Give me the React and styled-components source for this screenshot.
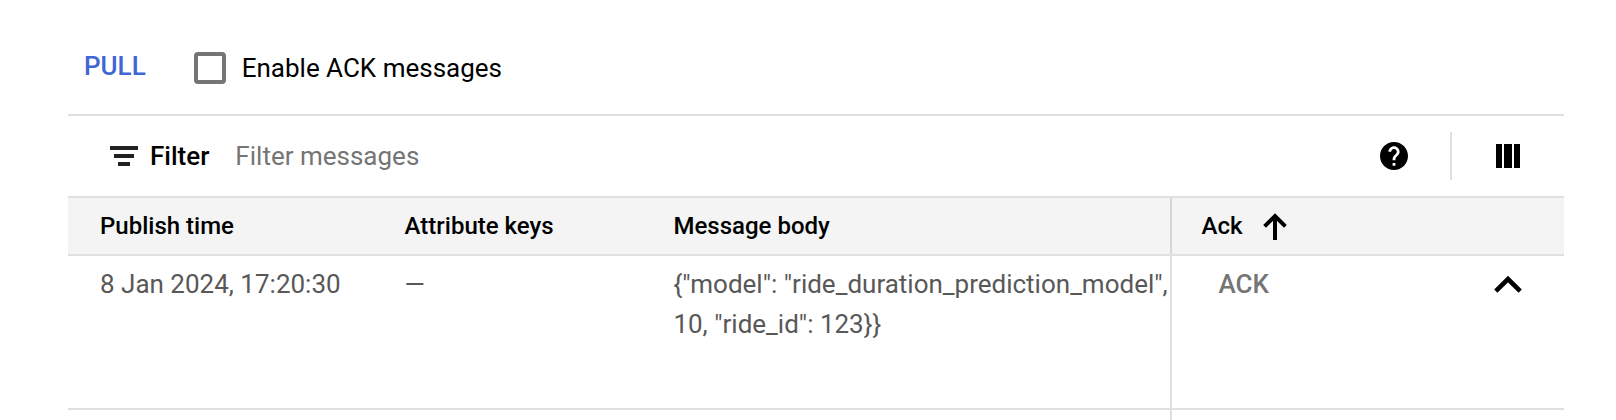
import React from "react";
import styled, { createGlobalStyle } from "styled-components";

const GlobalStyle = createGlobalStyle`
  * { box-sizing: border-box; }
  body { margin: 0; background: #fff; font-family: Roboto, sans-serif; overflow: hidden; }
`;

const Panel = styled.main`
  margin: 0 52px 0 68px;
  height: 420px;
  overflow: hidden;
  color: #000;
  font-size: 26px;
  white-space: nowrap;
`;

const ActionBar = styled.div`
  display: flex;
  height: 116px;
  padding: 46px 0 0 16px;
  border-bottom: 2px solid #e0e0e0;
`;

const TextButton = styled.button`
  height: 40px;
  padding: 0;
  border: 0;
  background: none;
  font: 500 26px/40px Roboto, sans-serif;
  color: ${(p) => (p.$muted ? "#757575" : "#3f66d4")};
`;

const CheckLabel = styled.label`
  display: flex;
  align-items: center;
  gap: 16px;
  height: 40px;
  margin: 2px 0 0 48px;
  line-height: 40px;
`;

const CheckBox = styled.span`
  width: 32px;
  height: 32px;
  border: 4px solid #757575;
  border-radius: 4px;
`;

const FilterBar = styled.div`
  display: flex;
  align-items: center;
  height: 82px;
  padding: 0 44px 0 42px;
  border-bottom: 2px solid #e0e0e0;
  line-height: 40px;
`;

const FilterTitle = styled.span`
  margin-left: 12px;
  font-weight: 500;
`;

const FilterHint = styled.span`
  flex: 1;
  margin-left: 26px;
  color: #757575;
`;

const Separator = styled.span`
  width: 2px;
  height: 48px;
  margin: 0 44px 0 42px;
  background: #e0e0e0;
`;

const Row = styled.div`
  display: grid;
  grid-template-columns: 304px 270px 530px 1fr;
  height: ${(p) => p.$height}px;
  color: #585858;
  line-height: 40px;
  border-bottom: 2px solid #e0e0e0;
`;

const HeaderRow = styled(Row)`
  background: #f4f4f4;
  color: #000;
  font-size: 24px;
  font-weight: 500;
  line-height: 56px;
`;

const Cell = styled.div`
  padding: ${(p) => p.$top || 0}px 0 0 ${(p) => p.$left || 0}px;
  border-right: ${(p) => (p.$edge ? `2px solid ${p.$edge}` : "0")};
  overflow: hidden;
`;

const AckHeader = styled.div`
  display: flex;
  align-items: center;
  gap: 18px;
  padding-left: 29.5px;
`;

const AckTitle = styled.span`
  width: 42.5px;
`;

const AckCell = styled.div`
  display: flex;
  align-items: flex-start;
  justify-content: space-between;
  padding: 8px 42px 0 46.4px;
`;

const Icon = styled.svg`
  display: block;
  flex: none;
  margin-top: ${(p) => p.$top || 0}px;
`;

const FilterIcon = () => (
  <Icon width="28" height="20" fill="#212121">
    <path d="M0 0h28v4H0zM4 8h20v4H4zM8 16h12v4H8z" />
  </Icon>
);

const HelpIcon = () => (
  <Icon width="28" height="28" viewBox="2 2 20 20">
    <path d="M12 2C6.48 2 2 6.48 2 12s4.48 10 10 10 10-4.48 10-10S17.52 2 12 2zm1 17h-2v-2h2v2zm2.07-7.75l-.9.92C13.45 12.9 13 13.5 13 15h-2v-.5c0-1.1.45-2.1 1.17-2.83l1.24-1.26c.37-.36.59-.86.59-1.41 0-1.1-.9-2-2-2s-2 .9-2 2H8c0-2.21 1.79-4 4-4s4 1.79 4 4c0 .88-.36 1.68-.93 2.25z" />
  </Icon>
);

const ColumnsIcon = () => (
  <Icon width="24" height="24">
    <path d="M0 0h6v24H0zM8 0h8v24H8zM18 0h6v24h-6z" />
  </Icon>
);

const SortIcon = () => (
  <Icon width="26" height="28" fill="none" stroke="#000" strokeWidth="4">
    <path d="M13 28V5M2.6 14.4 13 4l10.4 10.4" />
  </Icon>
);

const CollapseIcon = () => (
  <Icon $top={11} width="28" height="20" fill="none" stroke="#000" strokeWidth="4.6">
    <path d="M1.8 16.2 14 4l12.2 12.2" />
  </Icon>
);

export default function App() {
  return (
    <Panel>
      <GlobalStyle />
      <ActionBar>
        <TextButton>PULL</TextButton>
        <CheckLabel>
          <CheckBox />
          Enable ACK messages
        </CheckLabel>
      </ActionBar>
      <FilterBar>
        <FilterIcon />
        <FilterTitle>Filter</FilterTitle>
        <FilterHint>Filter messages</FilterHint>
        <HelpIcon />
        <Separator />
        <ColumnsIcon />
      </FilterBar>
      <HeaderRow $height={58}>
        <Cell $left={32}>Publish time</Cell>
        <Cell $left={32.6}>Attribute keys</Cell>
        <Cell $left={31.5} $edge="#d6d6d6">Message body</Cell>
        <AckHeader>
          <AckTitle>Ack</AckTitle>
          <SortIcon />
        </AckHeader>
      </HeaderRow>
      <Row $height={154}>
        <Cell $top={8} $left={32}>8 Jan 2024, 17:20:30</Cell>
        <Cell $top={8} $left={32.4}>—</Cell>
        <Cell $top={8} $left={31.4} $edge="#e0e0e0">
          {'{"model": "ride_duration_prediction_model",'}
          <br />
          {'10, "ride_id": 123}}'}
        </Cell>
        <AckCell>
          <TextButton $muted>ACK</TextButton>
          <CollapseIcon />
        </AckCell>
      </Row>
      <Row $height={154}>
        <Cell />
        <Cell />
        <Cell $edge="#e0e0e0" />
      </Row>
    </Panel>
  );
}
